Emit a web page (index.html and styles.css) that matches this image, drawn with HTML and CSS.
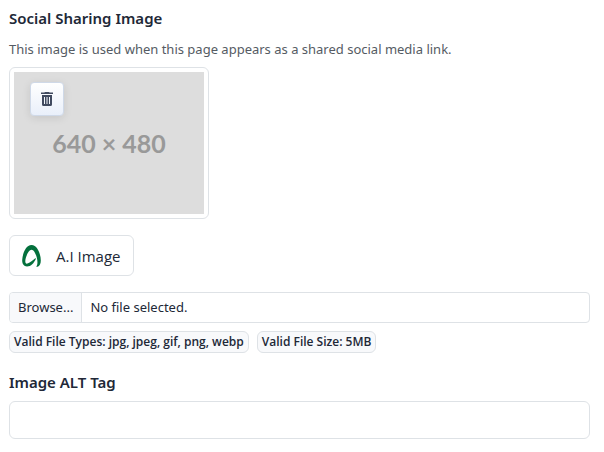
FILE: index.html
```
<!DOCTYPE html>
<html lang="en">
<head>
  <meta charset="UTF-8">
  <meta name="viewport" content="width=device-width, initial-scale=1.0">
  <title>Social Sharing Image</title>
  <link rel="stylesheet" href="styles.css">
</head>
<body>

  <form class="share-form">
    <h2 class="form-title">Social Sharing Image</h2>
    <p class="help-text">This image is used when this page appears as a shared social media link.</p>

    <!-- Current image -->
    <div class="thumbnail">
      <div class="placeholder">640 × 480</div>
      <button type="button" class="delete-btn" aria-label="Delete image">
        <svg width="14" height="14" viewBox="0 0 14 14" fill="#404a5f">
          <path d="M5 0h4l.6 .6H13V2H1V.6h3.4z"/>
          <path fill-rule="evenodd" d="M2 3h10V12.500a1.500 1.500 0 0 1-1.500 1.500h-7A1.500 1.500 0 0 1 2 12.500zM4 5v7h1V5zM6.500 5v7h1V5zM9 5v7h1V5z"/>
        </svg>
      </button>
    </div>

    <button type="button" class="ai-btn">
      <svg width="19" height="22" viewBox="0 0 19 22" fill="#04703c">
        <path d="M5 21.500C2 21.500 0 19 .2 15C.6 9 3.500 0 9.600 0C15.500 0 18.800 9.500 18.800 15.500C18.800 18.500 17.800 21 15.500 21.800C14.800 22 14.200 21.800 14.500 21.200C16.500 18 15 11.500 13 8C12 6 10.800 4.800 9.400 4.800C7 4.800 3.500 11.500 3.300 16C3.200 18 4 19 5.500 18.500C8.500 17.500 10.500 15.500 13.600 13L13.800 14C12 18 9 21.500 5 21.500z"/>
      </svg>
      A.I Image
    </button>

    <!-- File picker -->
    <label class="file-picker">
      <input type="file" class="file-input" accept=".jpg,.jpeg,.gif,.png,.webp">
      <span class="file-browse">Browse...</span>
      <span class="file-name">No file selected.</span>
    </label>
    <div class="badges">
      <span class="badge">Valid File Types: jpg, jpeg, gif, png, webp</span>
      <span class="badge">Valid File Size: 5MB</span>
    </div>

    <label class="form-title" for="altTag">Image ALT Tag</label>
    <input type="text" id="altTag" class="text-input">
  </form>

</body>
</html>
```
FILE: styles.css
```
* {
  box-sizing: border-box;
}

body {
  margin: 0;
  background-color: #fff;
  color: #212837;
  font-family: "Noto Sans", "Open Sans", sans-serif;
  font-size: 15px;
  line-height: 24px;
}

.share-form {
  display: flex;
  flex-direction: column;
  align-items: flex-start;
  padding: 6px 14px 12px 9px;
}

.form-title {
  margin: 0;
  font-size: 15px;
  font-weight: 600;
}

.help-text {
  margin: 9px 0 8px;
  color: #555b63;
  font-size: 13px;
  line-height: 20px;
}

.thumbnail {
  position: relative;
  width: 200px;
  padding: 4px;
  border: 1px solid #dee2e6;
  border-radius: 6px;
}

.placeholder {
  display: flex;
  align-items: center;
  justify-content: center;
  aspect-ratio: 190 / 142;
  background-color: #ddd;
  color: #999;
  font-family: Lato, sans-serif;
  font-size: 25px;
  font-weight: 700;
}

/* sits over the top left corner of the image */
.delete-btn {
  position: absolute;
  top: 14px;
  left: 20px;
  display: flex;
  align-items: center;
  justify-content: center;
  width: 34px;
  height: 34px;
  padding: 0;
  border: 1px solid #cfd9e8;
  border-radius: 4px;
  background: linear-gradient(#fff, #e9effa);
  box-shadow: 0 2px 8px rgba(0, 0, 0, 0.1);
  cursor: pointer;
}

.ai-btn {
  display: flex;
  align-items: center;
  gap: 15px;
  height: 41px;
  margin: 16px 0;
  padding: 0 12px;
  border: 1px solid #dee2e6;
  border-radius: 6px;
  background-color: #fff;
  color: #212837;
  font-family: "Open Sans", sans-serif;
  font-size: 15px;
  cursor: pointer;
}

.file-picker {
  position: relative;
  display: flex;
  align-self: stretch;
  border: 1px solid #dee2e6;
  border-radius: 4px;
  font-size: 13px;
  line-height: 29px;
  overflow: hidden;
}

.file-input {
  position: absolute;
  inset: 0;
  width: 100%;
  opacity: 0;
  cursor: pointer;
}

.file-browse {
  padding: 0 8px;
  border-right: 1px solid #dee2e6;
  background-color: #f8f9fb;
}

.file-name {
  padding: 0 8px;
}

.badges {
  display: flex;
  flex-wrap: wrap;
  gap: 8px;
  margin: 8px 0 17px;
}

.badge {
  padding: 0 4px;
  border: 1px solid #dee2e6;
  border-radius: 6px;
  background-color: #f8f9fb;
  font-family: "Open Sans", sans-serif;
  font-size: 12px;
  font-weight: 600;
  line-height: 20px;
}

.text-input {
  align-self: stretch;
  height: 38px;
  margin-top: 7px;
  padding: 6px 12px;
  border: 1px solid #dee2e6;
  border-radius: 6px;
  background-color: #fff;
  color: #212837;
  font: inherit;
}

.text-input:focus {
  border-color: #86b7fe;
  outline: none;
}
```
